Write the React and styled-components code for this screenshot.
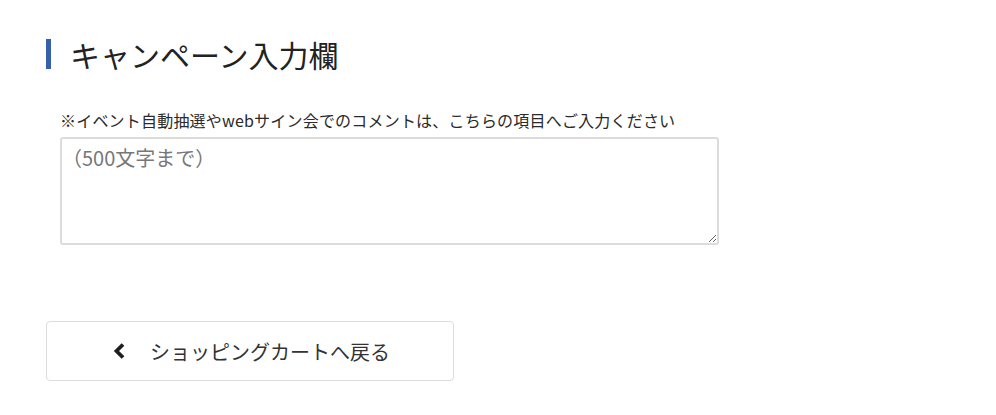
import React from 'react';
import styled, { createGlobalStyle } from 'styled-components';

const GlobalStyle = createGlobalStyle`
  body {
    margin: 0;
    background: #fff;
    font-family: 'Noto Sans CJK JP', 'Noto Sans', sans-serif;
    color: #222;
  }
`;

const Page = styled.div`
  padding: 39px 0 0 46px;
  width: 950px;
`;

const Title = styled.h2`
  margin: 0;
  border-left: 5px solid #3561a8;
  padding-left: 19px;
  font-size: 30px;
  font-weight: 400;
  line-height: 30px;
  height: 30px;
  color: #222;
  display: flex;
  align-items: center;
`;

const Field = styled.div`
  margin: 40px 0 0 14px;
  display: flex;
  flex-direction: column;
  gap: 6px;
`;

const Label = styled.label`
  font-size: 16px;
  line-height: 22px;
  color: #2a2a2a;
  letter-spacing: 0.2px;
`;

const Comment = styled.textarea`
  box-sizing: border-box;
  width: 659px;
  height: 108px;
  border: 2px solid #dcdcdc;
  border-radius: 3px;
  padding: 5px 8px 5px 0;
  font-family: inherit;
  font-size: 20px;
  line-height: 28px;
  color: #333;
  outline: none;

  &::placeholder {
    color: #777;
  }
`;

const BackButton = styled.button`
  margin-top: 76px;
  box-sizing: border-box;
  width: 408px;
  height: 60px;
  background: #fff;
  border: 1px solid #dcdcdc;
  border-radius: 4px;
  display: flex;
  align-items: center;
  justify-content: center;
  gap: 24px;
  padding: 0 0 0 2px;
  font-family: inherit;
  font-size: 20px;
  color: #333;
  cursor: pointer;
`;

const Chevron = () => (
    <svg width="14" height="18" viewBox="0 0 14 18">
        <path d="M11 2.5 L4.5 9 L11 15.5" fill="none" stroke="#1e1e1e" strokeWidth="3.8" />
    </svg>
);

function App() {
    return (
        <>
            <GlobalStyle />
            <Page>
                <Title>キャンペーン入力欄</Title>
                <Field>
                    <Label htmlFor="comment">※イベント自動抽選やwebサイン会でのコメントは、こちらの項目へご入力ください</Label>
                    <Comment id="comment" placeholder="（500文字まで）" />
                </Field>
                <BackButton>
                    <Chevron />
                    <span>ショッピングカートへ戻る</span>
                </BackButton>
            </Page>
        </>
    );
}

export default App;
